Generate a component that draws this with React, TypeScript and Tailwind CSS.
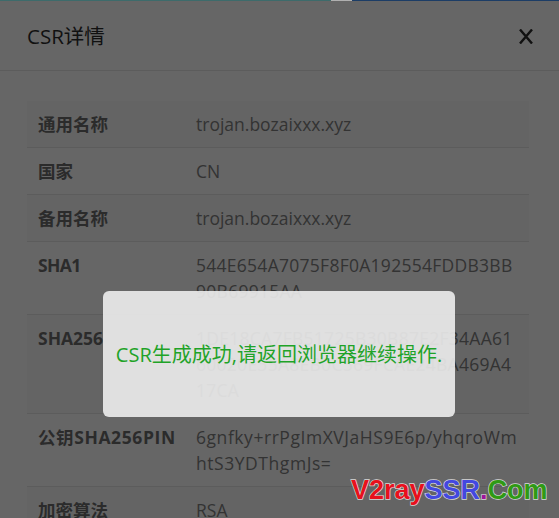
const rows = [
  { label: "通用名称", value: ["trojan.bozaixxx.xyz"], bg: "bg-[#646464]", labelClass: "", valueClass: "" },
  { label: "国家", value: ["CN"], bg: "", labelClass: "", valueClass: "" },
  { label: "备用名称", value: ["trojan.bozaixxx.xyz"], bg: "bg-[#646464]", labelClass: "", valueClass: "" },
  { label: "SHA1", value: ["544E654A7075F8F0A192554FDDB3BB", "90B69915AA"], bg: "", labelClass: "tracking-[-0.6px]", valueClass: "tracking-[0.27px]" },
  { label: "SHA256", value: ["1DE18CA7FB51725B30B87E2F34AA61", "60020E35A8EB0C569FCAE24BA469A4", "17CA"], bg: "bg-[#646464]", labelClass: "", valueClass: "tracking-[0.27px]" },
  { label: "公钥SHA256PIN", value: ["6gnfky+rrPgImXVJaHS9E6p/yhqroWm", "htS3YDThgmJs="], bg: "", labelClass: "tracking-[0.6px]", valueClass: "tracking-[0.55px]" },
  { label: "加密算法", value: ["RSA"], bg: "bg-[#646464]", labelClass: "", valueClass: "" },
];

export default function App() {
  return (
    <div className="relative h-[518px] w-[559px] overflow-hidden bg-[#666666] font-['Open_Sans','Noto_Sans_CJK_SC',sans-serif] text-[#2b2b2b]">
      <div className="flex h-px">
        <div className="w-[331px] bg-[#3d6b6b]" />
        <div className="w-[21px] bg-[#b0b0b0]" />
        <div className="flex-1 bg-[#1c3d66]" />
      </div>
      <header className="flex h-[70px] items-center justify-between border-b border-[#5c5c5c] px-[27px] pt-[2px] text-[#111111]">
        <span className="text-[20.5px]">CSR详情</span>
        <svg className="mr-[-1px] h-[15px] w-[14px]" viewBox="0 0 14 15" fill="none" stroke="#111111" strokeWidth="2.4">
          <path d="M1 0.5 13 14.5M13 0.5 1 14.5" />
        </svg>
      </header>
      <div className="pl-[27px] pr-[30px] pt-[30px]">
        {rows.map((row) => (
          <div key={row.label} className={`flex border-b border-[#5c5c5c] py-[10px] text-[17.5px] leading-[26px] ${row.bg}`}>
            <div className={`w-[169px] shrink-0 pl-[11px] font-bold whitespace-nowrap ${row.labelClass}`}>{row.label}</div>
            <div className={`whitespace-nowrap text-[#333333] ${row.valueClass}`}>
              {row.value.map((line) => (
                <div key={line}>{line}</div>
              ))}
            </div>
          </div>
        ))}
      </div>
      <div className="absolute left-[103px] top-[291px] flex h-[126px] w-[352px] items-center justify-center rounded-md bg-[#ededed]/90 pt-[2px] text-[20px] text-[#1fa328]">
        CSR生成成功,请返回浏览器继续操作.
      </div>
      <div className="absolute left-[351px] top-[473px] font-['Liberation_Sans',sans-serif] text-[27px] leading-[34px] font-bold [-webkit-text-stroke:1.4px_#d8d8d8] [paint-order:stroke_fill]">
        <span className="text-[#e8101c]">V2ray</span>
        <span className="text-[#4348e0]">SSR</span>
        <span className="text-[#a0149a]">.</span>
        <span className="text-[#2f9a14]">Com</span>
      </div>
    </div>
  );
}
